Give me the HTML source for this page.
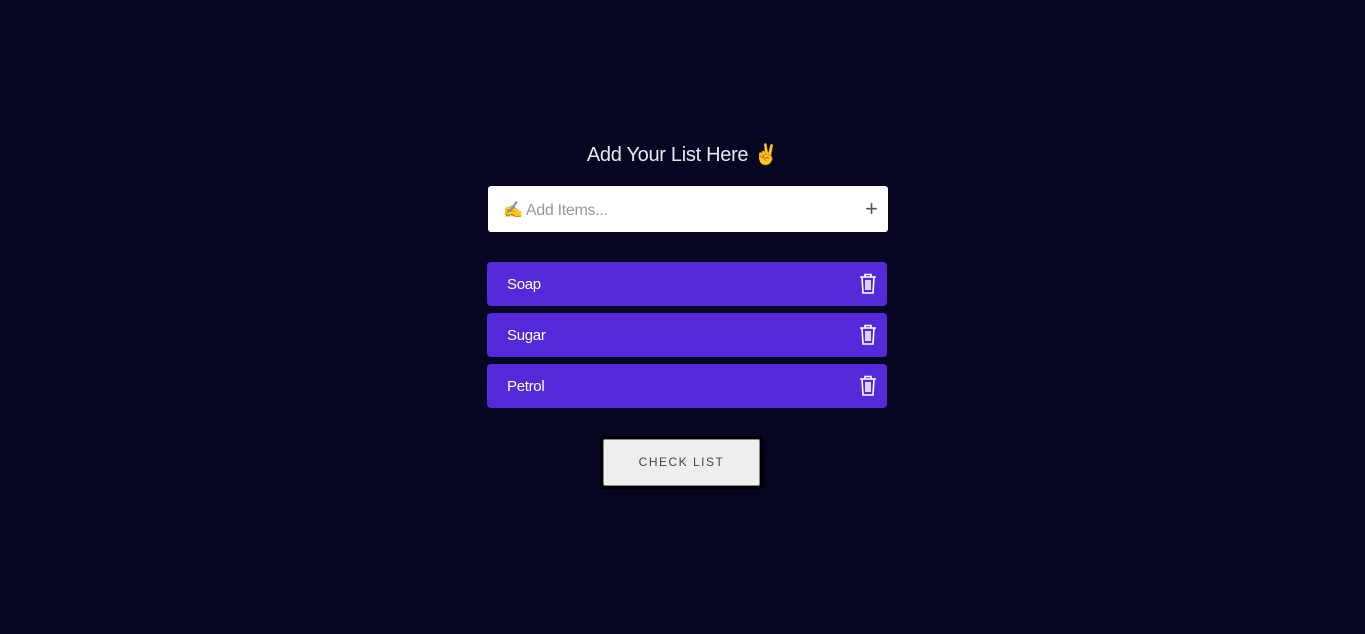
<!DOCTYPE html>
<html><head><style>
body{margin:0;background:#060622;width:1365px;height:634px;overflow:hidden;font-family:"Liberation Sans",sans-serif;position:relative}
.t{position:absolute;top:142px;left:0;width:1365px;text-align:center;color:#e8e8f0;font-size:20px;font-weight:300;letter-spacing:-0.3px}
.in{position:absolute;left:488px;top:186px;width:400px;height:46px;background:#fff;border-radius:3px}
.in span{position:absolute;left:15px;top:14px;font-size:16px;color:#999;letter-spacing:-0.3px}
.in b{position:absolute;right:10px;top:10px;font-size:22px;font-weight:300;color:#555}
.item{position:absolute;left:487px;width:400px;height:44px;background:#5429d9;border-radius:4px;color:#fff;font-size:15px;letter-spacing:-0.3px}
.item span{position:absolute;left:20px;top:14px}
.item svg{position:absolute;left:372px;top:11px}
.btn{position:absolute;left:600px;top:436px;width:159px;height:49px;border:2px solid #000;background:#000}
.btn div{position:absolute;left:1px;top:1px;width:157px;height:47px;background:#eee;border:1px solid #888;box-sizing:border-box;border-radius:2px;text-align:center;line-height:45px;font-size:12px;letter-spacing:1.5px;color:#444}
</style></head><body>
<div class="t">Add Your List Here ✌️</div>
<div class="in"><span>✍️ Add Items...</span><b>+</b></div>
<div class="item" style="top:262px"><span>Soap</span><svg width="18" height="22" viewBox="0 0 18 22" fill="none" stroke="#fff" stroke-width="1.6"><path d="M1 4h16M6 4V1.5h6V4M3 4l1 16h10l1-16M7 7v10M9 7v10M11 7v10"/></svg></div>
<div class="item" style="top:313px"><span>Sugar</span><svg width="18" height="22" viewBox="0 0 18 22" fill="none" stroke="#fff" stroke-width="1.6"><path d="M1 4h16M6 4V1.5h6V4M3 4l1 16h10l1-16M7 7v10M9 7v10M11 7v10"/></svg></div>
<div class="item" style="top:364px"><span>Petrol</span><svg width="18" height="22" viewBox="0 0 18 22" fill="none" stroke="#fff" stroke-width="1.6"><path d="M1 4h16M6 4V1.5h6V4M3 4l1 16h10l1-16M7 7v10M9 7v10M11 7v10"/></svg></div>
<div class="btn"><div>CHECK LIST</div></div>
</body></html>
